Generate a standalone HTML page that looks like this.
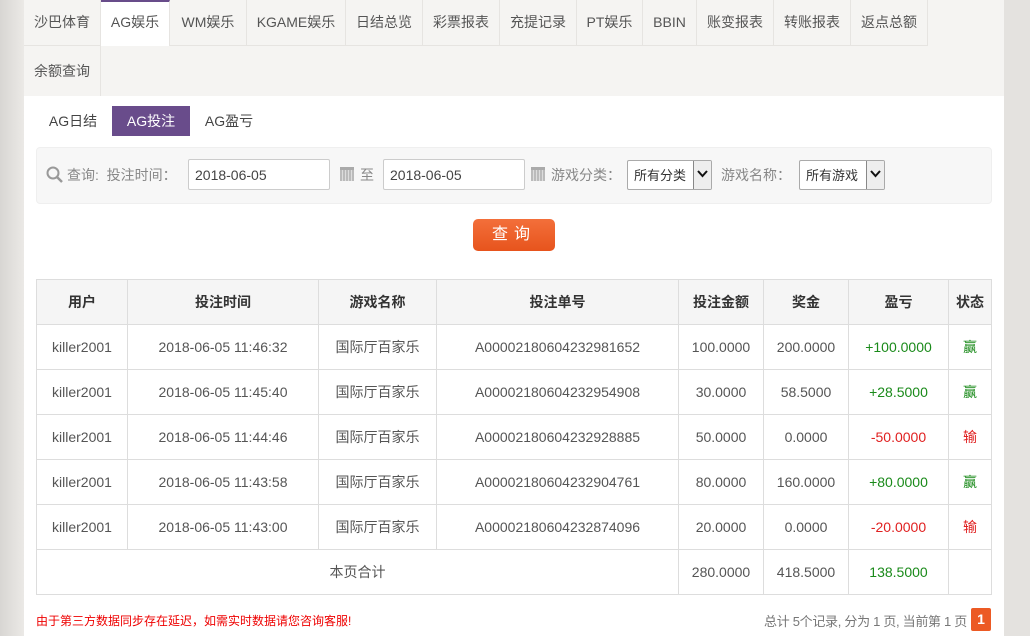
<!DOCTYPE html>
<html><head><meta charset="utf-8"><style>
*{margin:0;padding:0;box-sizing:border-box}
body{width:1030px;height:636px;overflow:hidden;background:#e4e2df;font-family:"Liberation Sans","Noto Sans CJK SC",sans-serif;font-size:14px;color:#444;position:relative}
.bgl{position:absolute;left:0;top:0;width:24px;height:636px;background:linear-gradient(90deg,#d8d6d3,#ebe9e6)}
.main{position:absolute;left:24px;top:0;width:980px;height:636px;background:#fff}
.nav{position:absolute;left:0;top:0;width:980px;height:96px;background:#f5f4f2}
.t{position:absolute;height:46px;line-height:44px;text-align:center;border-right:1px solid #e6e4e1;border-bottom:1px solid #e6e4e1;color:#555;font-size:14px}
.t.on{background:#fff;border-top:2px solid #684c8a;line-height:40px;border-bottom:none}
.sub{position:absolute;top:106px;height:30px;line-height:30px;text-align:center;font-size:14px;color:#444}
.sub.on{background:#694c8b;color:#fff}
.q{position:absolute;left:12px;top:147px;width:956px;height:57px;background:#f7f7f7;border-radius:4px;border:1px solid #efefef}
.lab{position:absolute;top:165px;color:#888;font-size:14px}
.inp{position:absolute;top:159px;height:31px;border:1px solid #ccc;background:#fff;border-radius:2px;line-height:30px;padding-left:6px;font-size:14px;color:#444}
.sel{position:absolute;top:160px;height:30px;border:1px solid #aaa;background:#fff;border-radius:2px;line-height:30px;padding-left:6px;font-size:13px;color:#333;overflow:hidden}
.sel b{position:absolute;right:0;top:0;width:18px;height:28px;border-left:1px solid #888;background:#eee}
.sel b svg{position:absolute;left:3px;top:9px}
.cal{position:absolute;top:167px;width:14px;height:14px;background:repeating-linear-gradient(90deg,#bbb 0 2px,#ddd 2px 3px);border-top:3px solid #aaa}
.btn{position:absolute;left:449px;top:219px;width:82px;height:32px;border-radius:5px;background:linear-gradient(#f36f3a,#e7541d);color:#fff;text-align:center;line-height:32px;font-size:16px;letter-spacing:6px}
table{position:absolute;left:12px;top:279px;border-collapse:collapse;font-size:14px}
td,th{border:1px solid #ddd;height:45px;text-align:center;color:#555;font-weight:normal}
th{background:#f5f5f5;font-weight:bold;color:#333}
.g{color:#1a8a1a}.r{color:#e02020}
.note{position:absolute;left:12px;top:612px;color:#e00;font-size:12px}
.pg{position:absolute;right:37px;top:611px;color:#777;font-size:13px;letter-spacing:-0.3px;white-space:nowrap}
.pn{position:absolute;left:947px;top:608px;width:20px;height:23px;background:#ec5a24;color:#fff;font-weight:bold;text-align:center;line-height:23px;border-radius:2px}
</style></head><body>
<div class="bgl"></div>
<div class="main">
<div class="nav">
<div class="t" style="left:0;width:77px">沙巴体育</div>
<div class="t on" style="left:77px;width:69px">AG娱乐</div>
<div class="t" style="left:146px;width:77px">WM娱乐</div>
<div class="t" style="left:223px;width:99px">KGAME娱乐</div>
<div class="t" style="left:322px;width:77px">日结总览</div>
<div class="t" style="left:399px;width:77px">彩票报表</div>
<div class="t" style="left:476px;width:77px">充提记录</div>
<div class="t" style="left:553px;width:66px">PT娱乐</div>
<div class="t" style="left:619px;width:54px">BBIN</div>
<div class="t" style="left:673px;width:77px">账变报表</div>
<div class="t" style="left:750px;width:77px">转账报表</div>
<div class="t" style="left:827px;width:77px">返点总额</div>
<div class="t" style="left:0;top:46px;width:77px;height:50px;line-height:50px;border-bottom:none">余额查询</div>
</div>
<div class="sub" style="left:12px;width:74px">AG日结</div>
<div class="sub on" style="left:88px;width:78px">AG投注</div>
<div class="sub" style="left:166px;width:78px">AG盈亏</div>
<div class="q"></div>
<svg style="position:absolute;left:22px;top:166px" width="18" height="18" viewBox="0 0 18 18"><circle cx="7" cy="7" r="5.5" fill="none" stroke="#999" stroke-width="2"/><path d="M11 11l5 5" stroke="#999" stroke-width="2.5"/></svg>
<div class="lab" style="left:43px">查询: &nbsp;投注时间：</div>
<div class="inp" style="left:164px;width:142px">2018-06-05</div>
<div class="cal" style="left:316px"></div>
<div class="lab" style="left:336px">至</div>
<div class="inp" style="left:359px;width:142px">2018-06-05</div>
<div class="cal" style="left:507px"></div>
<div class="lab" style="left:527px">游戏分类：</div>
<div class="sel" style="left:603px;width:85px">所有分类<b><svg width="11" height="8" viewBox="0 0 11 8"><path d="M1 1l4.5 5 4.5-5" fill="none" stroke="#111" stroke-width="2"/></svg></b></div>
<div class="lab" style="left:697px">游戏名称：</div>
<div class="sel" style="left:775px;width:86px">所有游戏<b><svg width="11" height="8" viewBox="0 0 11 8"><path d="M1 1l4.5 5 4.5-5" fill="none" stroke="#111" stroke-width="2"/></svg></b></div>
<div class="btn">查询</div>
<table>
<tr><th style="width:91px">用户</th><th style="width:191px">投注时间</th><th style="width:118px">游戏名称</th><th style="width:242px">投注单号</th><th style="width:85px">投注金额</th><th style="width:85px">奖金</th><th style="width:100px">盈亏</th><th style="width:43px">状态</th></tr>
<tr><td>killer2001</td><td>2018-06-05 11:46:32</td><td>国际厅百家乐</td><td>A00002180604232981652</td><td>100.0000</td><td>200.0000</td><td class="g">+100.0000</td><td class="g">赢</td></tr>
<tr><td>killer2001</td><td>2018-06-05 11:45:40</td><td>国际厅百家乐</td><td>A00002180604232954908</td><td>30.0000</td><td>58.5000</td><td class="g">+28.5000</td><td class="g">赢</td></tr>
<tr><td>killer2001</td><td>2018-06-05 11:44:46</td><td>国际厅百家乐</td><td>A00002180604232928885</td><td>50.0000</td><td>0.0000</td><td class="r">-50.0000</td><td class="r">输</td></tr>
<tr><td>killer2001</td><td>2018-06-05 11:43:58</td><td>国际厅百家乐</td><td>A00002180604232904761</td><td>80.0000</td><td>160.0000</td><td class="g">+80.0000</td><td class="g">赢</td></tr>
<tr><td>killer2001</td><td>2018-06-05 11:43:00</td><td>国际厅百家乐</td><td>A00002180604232874096</td><td>20.0000</td><td>0.0000</td><td class="r">-20.0000</td><td class="r">输</td></tr>
<tr><td colspan="4">本页合计</td><td>280.0000</td><td>418.5000</td><td class="g">138.5000</td><td></td></tr>
</table>
<div class="note">由于第三方数据同步存在延迟，如需实时数据请您咨询客服!</div>
<div class="pg">总计 5个记录, 分为 1 页, 当前第 1 页</div>
<div class="pn">1</div>
</div>
</body></html>
